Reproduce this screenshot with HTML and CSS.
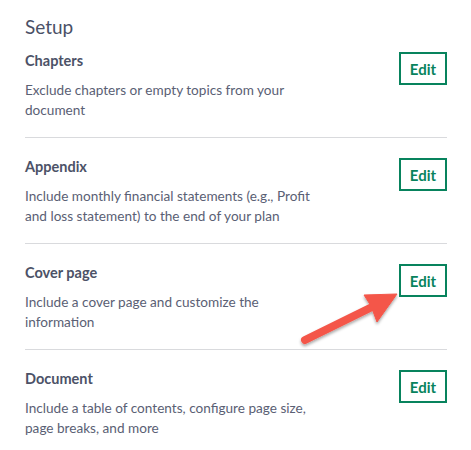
FILE: index.html
```html
<!DOCTYPE html>
<html lang="en">
<head>
<meta charset="utf-8">
<title>Setup</title>
<link rel="stylesheet" href="styles.css">
</head>
<body>
<main class="setup">
  <h1 class="setup-title">Setup</h1>
  <ul class="setup-list">
    <li class="setup-item">
      <div class="setup-text">
        <h2 class="item-title">Chapters</h2>
        <p class="item-desc">Exclude chapters or empty topics from your document</p>
      </div>
      <button class="edit-btn">Edit</button>
    </li>
    <li class="setup-item">
      <div class="setup-text">
        <h2 class="item-title">Appendix</h2>
        <p class="item-desc">Include monthly financial statements (e.g., Profit and loss statement) to the end of your plan</p>
      </div>
      <button class="edit-btn">Edit</button>
    </li>
    <li class="setup-item">
      <div class="setup-text">
        <h2 class="item-title">Cover page</h2>
        <p class="item-desc">Include a cover page and customize the information</p>
      </div>
      <button class="edit-btn">Edit</button>
    </li>
    <li class="setup-item">
      <div class="setup-text">
        <h2 class="item-title">Document</h2>
        <p class="item-desc">Include a table of contents, configure page size, page breaks, and more</p>
      </div>
      <button class="edit-btn">Edit</button>
    </li>
  </ul>
  <svg class="arrow" viewBox="0 0 471 450" width="471" height="450" aria-hidden="true">
    <defs>
      <filter id="sh" x="-20%" y="-20%" width="140%" height="160%">
        <feDropShadow dx="0" dy="2" stdDeviation="1.6" flood-color="#000" flood-opacity="0.35"/>
      </filter>
    </defs>
    <g filter="url(#sh)" fill="#f4574a" stroke="#f4574a">
      <line x1="305" y1="340" x2="372" y2="307" stroke-width="8" stroke-linecap="round"/>
      <polygon points="397,294 364,295 371,306 377,322" stroke-width="1" stroke-linejoin="round"/>
    </g>
  </svg>
</main>
</body>
</html>
```

FILE: styles.css
```css
* { box-sizing: border-box; }
html, body { margin: 0; padding: 0; background: #ffffff; }
body {
  font-family: "Lato", "Open Sans", "DejaVu Sans", sans-serif;
  color: #4c5267;
}
.setup {
  position: relative;
  width: 471px;
  height: 450px;
  padding: 15px 24px 0 25px;
}
.setup-title {
  margin: 0 0 12px;
  font-size: 19px;
  line-height: 24px;
  font-weight: 400;
  color: #4a5066;
}
.setup-list {
  list-style: none;
  margin: 0;
  padding: 0;
}
.setup-item {
  display: flex;
  justify-content: space-between;
  align-items: flex-start;
  padding: 19px 0 17px;
  border-bottom: 1px solid #d9dadd;
}
.setup-item:first-child { padding-top: 0; }
.setup-item:last-child { border-bottom: none; }
.setup-text { max-width: 295px; }
.item-title {
  margin: 0 0 9px;
  font-size: 14.5px;
  line-height: 20px;
  font-weight: 700;
  color: #4c5267;
}
.item-desc {
  margin: 0;
  font-size: 13.6px;
  line-height: 20px;
  color: #5a6074;
}
.edit-btn {
  margin-top: 1px;
  width: 48px;
  height: 33px;
  padding: 0;
  border: 2px solid #08835d;
  background: #ffffff;
  color: #08835d;
  font-family: inherit;
  font-size: 15px;
  font-weight: 700;
  cursor: pointer;
}
.arrow {
  position: absolute;
  left: 0;
  top: 0;
  pointer-events: none;
}
```
